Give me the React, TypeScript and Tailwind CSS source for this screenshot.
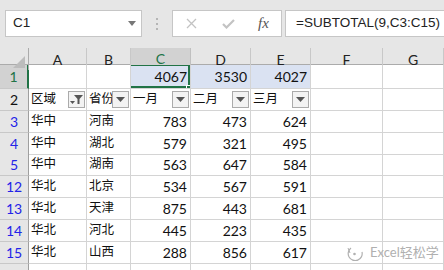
const font = { fontFamily: 'Lato, "Noto Sans CJK SC", sans-serif' };

const cols = "grid grid-cols-[29px_58px_44px_60px_60px_60px_72px_1fr]";

type Row = { n: string; region: string; prov: string; m1: number; m2: number; m3: number; h: string };

const rows: Row[] = [
  { n: "3", region: "华中", prov: "河南", m1: 783, m2: 473, m3: 624, h: "h-[22px]" },
  { n: "4", region: "华中", prov: "湖北", m1: 579, m2: 321, m3: 495, h: "h-[21px]" },
  { n: "5", region: "华中", prov: "湖南", m1: 563, m2: 647, m3: 584, h: "h-[22px]" },
  { n: "12", region: "华北", prov: "北京", m1: 534, m2: 567, m3: 591, h: "h-[22px]" },
  { n: "13", region: "华北", prov: "天津", m1: 875, m2: 443, m3: 681, h: "h-[22px]" },
  { n: "14", region: "华北", prov: "河北", m1: 445, m2: 223, m3: 435, h: "h-[22px]" },
  { n: "15", region: "华北", prov: "山西", m1: 288, m2: 856, m3: 617, h: "h-[22px]" },
];

const cell = "border-r border-b border-[#d4d4d4] flex items-center overflow-hidden whitespace-nowrap";
const textCell = `${cell} pl-[2px] text-[12.5px]`;
const rowHead = "border-r border-r-[#9f9f9f] border-b border-b-[#c8c8c8] bg-[#e6e6e6] flex items-center justify-center";

function FilterBtn({ active }: { active?: boolean }) {
  return (
    <div className="absolute right-px top-[2px] w-[17px] h-[17px] border border-[#ababab] bg-[#f3f3f3] flex items-center justify-center">
      {active ? (
        <svg width="13" height="11" viewBox="0 0 13 11">
          <path d="M4 1h9L9.5 5v5h-2V5z" fill="#555" />
          <path d="M0 7h5L2.5 10z" fill="#555" />
        </svg>
      ) : (
        <svg width="9" height="5" viewBox="0 0 9 5">
          <path d="M0 0h9L4.5 5z" fill="#555" />
        </svg>
      )}
    </div>
  );
}

export default function App() {
  return (
    <div className="w-[444px] h-[270px] overflow-hidden bg-white text-[14px] text-[#111] relative" style={font}>
      {/* formula bar */}
      <div className="h-[48px] bg-[#e6e6e6] flex items-start pt-[10px] pl-[5px]">
        <div className="w-[137px] h-[27px] bg-white border border-[#c6c6c6] flex items-center pl-[7px] pr-[5px] justify-between" style={{ fontFamily: '"Liberation Sans", sans-serif' }}>
          <span className="text-[13.5px] text-[#222]">C1</span>
          <svg width="8" height="5" viewBox="0 0 8 5">
            <path d="M0 0h8L4 5z" fill="#777" />
          </svg>
        </div>
        <div className="w-[30px] h-[27px] flex flex-col items-center justify-center gap-[3px]">
          <div className="w-[2px] h-[2px] bg-[#b5b5b5]" />
          <div className="w-[2px] h-[2px] bg-[#b5b5b5]" />
          <div className="w-[2px] h-[2px] bg-[#b5b5b5]" />
        </div>
        <div className="w-[110px] h-[27px] bg-white border border-[#c6c6c6] flex items-center pl-[13px]">
          <svg width="11" height="11" viewBox="0 0 11 11">
            <path d="M1 1l9 9M10 1l-9 9" stroke="#c3c3c3" strokeWidth="1.3" />
          </svg>
          <svg className="ml-[25px]" width="13" height="10" viewBox="0 0 13 10">
            <path d="M1 5l3.5 3.5L12 1" stroke="#c3c3c3" strokeWidth="2.2" fill="none" />
          </svg>
          <span className="ml-[23px] italic text-[#555] text-[15px]" style={{ fontFamily: '"Liberation Serif", serif' }}>
            fx
          </span>
        </div>
        <div className="ml-[3px] flex-1 h-[27px] bg-white border border-r-0 border-[#c6c6c6] flex items-center pl-[10px]" style={{ fontFamily: '"Liberation Sans", sans-serif' }}>
          <span className="text-[13.5px] text-[#222]">=SUBTOTAL(9,C3:C15)</span>
        </div>
      </div>

      {/* column headers */}
      <div className={`${cols} h-[17px] bg-[#e6e6e6] border-b border-[#ababab]`}>
        <div className="border-r border-[#ababab] relative">
          <svg className="absolute right-[3px] bottom-[2px]" width="12" height="12" viewBox="0 0 12 12">
            <path d="M12 0v12H0z" fill="#bcbcbc" />
          </svg>
        </div>
        {["A", "B", "C", "D", "E", "F", "G"].map((c) => (
          <div
            key={c}
            className={
              c === "C"
                ? "bg-[#d2d2d2] border-r border-[#c0c0c0] border-b-2 border-b-[#217346] -mb-px flex items-center justify-center text-[#217346]"
                : "border-r border-[#c8c8c8] flex items-center justify-center text-[#222]"
            }
          >
            {c}
          </div>
        ))}
      </div>

      {/* row 1 */}
      <div className={`${cols} h-[24px]`}>
        <div className="border-r-2 border-r-[#217346] border-b border-b-[#c8c8c8] bg-[#d2d2d2] flex items-center justify-center text-[#217346]">1</div>
        <div className={cell} />
        <div className={cell} />
        <div className={`${cell} bg-[#dae2f2] justify-end pr-[3px] relative`}>
          4067
          <div className="absolute -left-[2px] -top-px right-0 bottom-0 border-2 border-[#217346]" />
          <div className="absolute -right-[2px] -bottom-[3px] w-[6px] h-[6px] bg-[#217346] border border-white" />
        </div>
        <div className={`${cell} bg-[#dae2f2] justify-end pr-[3px]`}>3530</div>
        <div className={`${cell} bg-[#dae2f2] justify-end pr-[3px]`}>4027</div>
        <div className={cell} />
        <div className={cell} />
      </div>

      {/* row 2 */}
      <div className={`${cols} h-[22px]`}>
        <div className={rowHead}>2</div>
        <div className={`${textCell} relative`}>
          区域
          <FilterBtn active />
        </div>
        <div className={`${textCell} relative`}>
          省份
          <FilterBtn />
        </div>
        <div className={`${textCell} relative`}>
          一月
          <FilterBtn />
        </div>
        <div className={`${textCell} relative`}>
          二月
          <FilterBtn />
        </div>
        <div className={`${textCell} relative`}>
          三月
          <FilterBtn />
        </div>
        <div className={cell} />
        <div className={cell} />
      </div>

      {rows.map((r) => (
        <div key={r.n} className={`${cols} ${r.h}`}>
          <div className={`${rowHead} text-[#2323e8]`}>{r.n}</div>
          <div className={textCell}>{r.region}</div>
          <div className={textCell}>{r.prov}</div>
          <div className={`${cell} justify-end pr-[3px]`}>{r.m1}</div>
          <div className={`${cell} justify-end pr-[3px]`}>{r.m2}</div>
          <div className={`${cell} justify-end pr-[3px]`}>{r.m3}</div>
          <div className={cell} />
          <div className={cell} />
        </div>
      ))}

      <div className={`${cols} h-[22px]`}>
        <div className={rowHead} />
        <div className={cell} />
        <div className={cell} />
        <div className={cell} />
        <div className={cell} />
        <div className={cell} />
        <div className={cell} />
        <div className={cell} />
      </div>

      {/* watermark */}
      <div className="absolute left-[346px] top-[243px] flex items-center gap-[6px] text-[#b0b0b0]">
        <svg width="18" height="16" viewBox="0 0 18 16">
          <path d="M5 3a7 7 0 1 0 11 4" stroke="#b0b0b0" strokeWidth="1.2" fill="none" />
          <circle cx="8.5" cy="9" r="1.3" fill="#b0b0b0" />
          <path d="M2 3l2 5" stroke="#b0b0b0" strokeWidth="1" />
        </svg>
        <span className="text-[13px]">Excel轻松学</span>
      </div>
    </div>
  );
}
